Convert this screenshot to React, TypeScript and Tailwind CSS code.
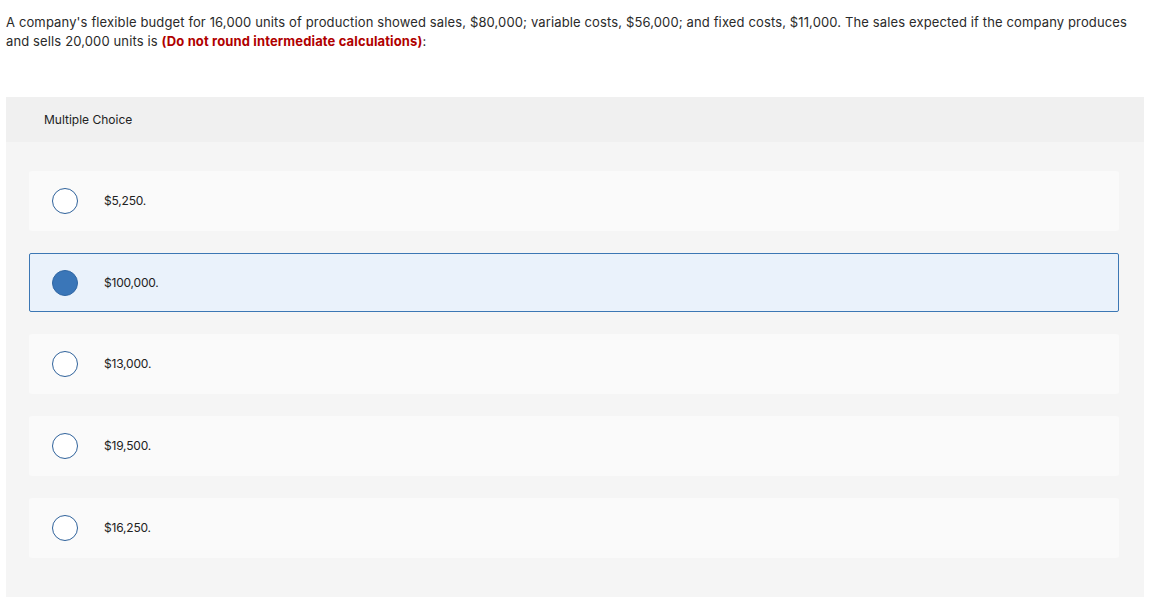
const options = [
  { id: 1, label: "$5,250.", selected: false },
  { id: 2, label: "$100,000.", selected: true },
  { id: 3, label: "$13,000.", selected: false },
  { id: 4, label: "$19,500.", selected: false },
  { id: 5, label: "$16,250.", selected: false },
]

export default function App() {
  return (
    <div className="min-h-[597px] bg-white font-['Inter','Liberation_Sans',sans-serif] text-[#333]">
      {/* Question */}
      <p className="pl-[6px] pr-[6px] pt-[13px] text-[13px] leading-[19px] tracking-[0.13px] text-[#2a2a2a]">
        A company's flexible budget for 16,000 units of production showed sales, $80,000; variable costs, $56,000; and
        fixed costs, $11,000. The sales expected if the company produces and sells 20,000 units is{" "}
        <strong className="font-bold text-[#b00000]">(Do not round intermediate calculations)</strong>:
      </p>

      {/* Answer panel */}
      <div className="mx-[6px] mt-[46px] rounded-t-[2px] bg-[#f5f5f5]">
        <div className="h-[45px] flex items-center px-[38px] bg-[#f0f0f0] text-[12px] text-[#222]">
          Multiple Choice
        </div>
        <div className="flex flex-col gap-[22px] pt-[29px] pb-[40px] pl-[23px] pr-[25px]">
          {options.map((opt) => (
            <div
              key={opt.id}
              className={
                opt.selected
                  ? "h-[59px] flex items-center rounded-[2px] border border-[#3c77b4] bg-[#eaf2fb]"
                  : "h-[60px] flex items-center rounded-[3px] border border-transparent bg-[#fafafa]"
              }
            >
              <span
                className={
                  opt.selected
                    ? "ml-[22px] w-[26px] h-[26px] rounded-full bg-[#3a76b8] border border-[#2f66a3]"
                    : "ml-[22px] w-[26px] h-[26px] rounded-full bg-white border-[1.5px] border-[#2f629b]"
                }
              />
              <span className="ml-[26px] text-[12px] tracking-[-0.2px] text-[#222]">{opt.label}</span>
            </div>
          ))}
        </div>
      </div>
    </div>
  )
}
